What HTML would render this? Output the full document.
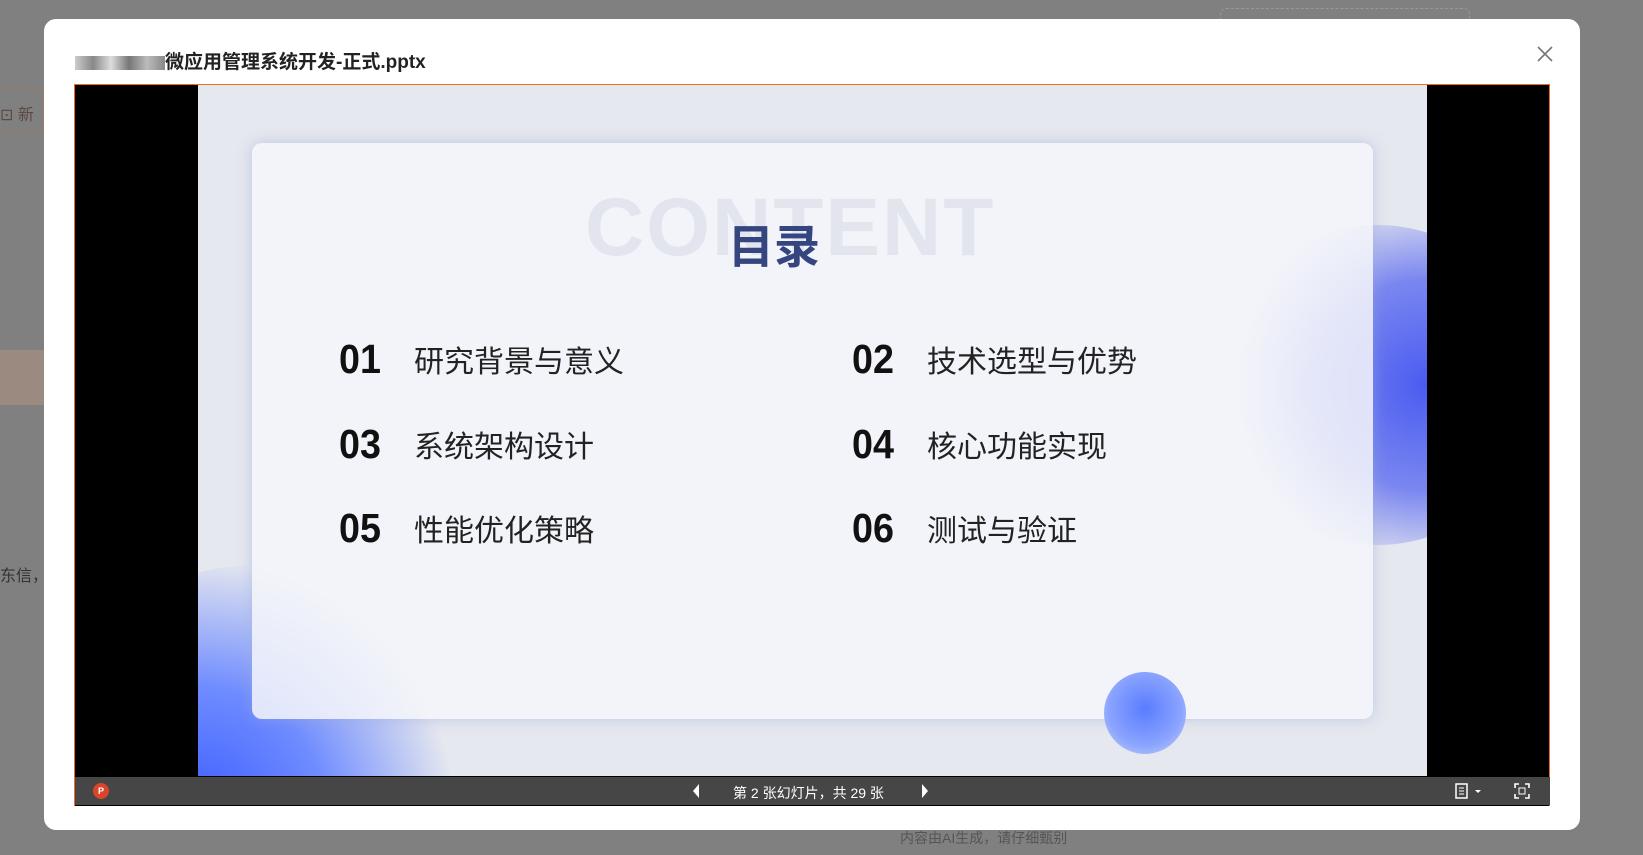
<!DOCTYPE html>
<html><head><meta charset="utf-8"><style>
*{margin:0;padding:0;box-sizing:border-box}
html,body{width:1643px;height:855px;overflow:hidden}
body{background:#808080;position:relative;font-family:"Liberation Sans","Noto Sans CJK SC",sans-serif}
.abs{position:absolute}
.modal{left:44px;top:19px;width:1536px;height:811px;background:#fff;border-radius:12px}
.title{left:75px;top:47px;font-size:19px;color:#222;font-weight:bold}
.frame{left:74px;top:84px;width:1476px;height:722px;border:1px solid #f06a2a;border-bottom:none;background:#000}
.slide{left:198px;top:85px;width:1229px;height:691px;background:#e6e8ef;overflow:hidden}
.card{left:54px;top:58px;width:1121px;height:576px;background:rgba(245,246,250,.86);border-radius:10px;box-shadow:0 0 14px rgba(150,170,220,.5)}
.num{font-size:41px;font-weight:bold;color:#111;transform:scaleX(.92);transform-origin:left}
.txt{font-size:30px;color:#222}
.bar{left:75px;top:777px;width:1475px;height:28px;background:#464646;color:#fff;font-size:14px}
</style></head><body>
<div class="abs" style="left:0;top:88px;width:44px;height:44px;border:1px solid #9a7a68;border-left:none;color:#5a4a40;font-size:16px;padding:12px 0 0 0">⊡ 新</div>
<div class="abs" style="left:0;top:350px;width:44px;height:55px;background:#9a8a80"></div>
<div class="abs" style="left:0;top:562px;color:#333;font-size:16px">东信，</div>
<div class="abs" style="left:1220px;top:8px;width:250px;height:12px;border:1px dashed #999;border-bottom:none;border-radius:6px 6px 0 0"></div>
<div class="abs" style="left:900px;top:829px;color:#555;font-size:14px;line-height:18px">内容由AI生成，请仔细甄别</div>
<div class="abs modal"></div>
<div class="abs title"><span style="display:inline-block;width:90px;height:14px;background:linear-gradient(90deg,#ccc,#888,#ddd,#777,#bbb,#888);vertical-align:middle"></span>微应用管理系统开发-正式.pptx</div>
<svg class="abs" style="left:1535px;top:44px" width="20" height="20"><path d="M3 3L17 17M17 3L3 17" stroke="#777" stroke-width="1.6"/></svg>
<div class="abs frame"></div>
<div class="abs slide">
 <div class="abs" style="left:1020px;top:140px;width:320px;height:320px;border-radius:50%;background:radial-gradient(circle at 65% 50%,#4a5cf0 0%,#7a86f0 40%,rgba(200,205,245,0) 72%)"></div>
 <div class="abs" style="left:-150px;top:480px;width:420px;height:360px;border-radius:50%;background:radial-gradient(circle at 35% 70%,#3a5cff 0%,#6f8cff 35%,rgba(220,225,245,0) 70%)"></div>
 <div class="abs card">
  <div class="abs" style="left:333px;top:38px;font-size:82px;font-weight:bold;color:#e2e5ee;letter-spacing:2px">CONTENT</div>
  <div class="abs" style="left:476px;top:68px;font-size:46px;font-weight:bold;color:#34457f">目录</div>
  <div class="abs num" style="left:87px;top:193px">01</div><div class="abs txt" style="left:162px;top:194px">研究背景与意义</div>
  <div class="abs num" style="left:600px;top:193px">02</div><div class="abs txt" style="left:675px;top:194px">技术选型与优势</div>
  <div class="abs num" style="left:87px;top:278px">03</div><div class="abs txt" style="left:162px;top:279px">系统架构设计</div>
  <div class="abs num" style="left:600px;top:278px">04</div><div class="abs txt" style="left:675px;top:279px">核心功能实现</div>
  <div class="abs num" style="left:87px;top:362px">05</div><div class="abs txt" style="left:162px;top:363px">性能优化策略</div>
  <div class="abs num" style="left:600px;top:362px">06</div><div class="abs txt" style="left:675px;top:363px">测试与验证</div>
 </div>
 <div class="abs" style="left:906px;top:587px;width:82px;height:82px;border-radius:50%;background:radial-gradient(circle at 50% 45%,#5a7cff,#8aa4ff 60%,rgba(160,180,255,.3))"></div>
</div>
<div class="abs bar">
 <div class="abs" style="left:18px;top:6px;width:16px;height:16px;border-radius:50%;background:#d9442a;color:#fff;font-size:9px;font-weight:bold;text-align:center;line-height:16px">P</div>
 <svg class="abs" style="left:616px;top:6px" width="10" height="16"><path d="M8 1L2 8L8 15Z" fill="#fff"/></svg>
 <div class="abs" style="left:658px;top:6px">第 2 张幻灯片，共 29 张</div>
 <svg class="abs" style="left:845px;top:6px" width="10" height="16"><path d="M2 1L8 8L2 15Z" fill="#fff"/></svg>
 <svg class="abs" style="left:1380px;top:6px" width="30" height="16"><rect x="1" y="1" width="11" height="14" fill="none" stroke="#fff" stroke-width="1.5"/><path d="M4 5h5M4 8h5M4 11h5" stroke="#fff"/><path d="M20 7l3 3 3-3Z" fill="#fff"/></svg>
 <svg class="abs" style="left:1439px;top:6px" width="16" height="16"><path d="M1 5V1h4M11 1h4v4M15 11v4h-4M5 15H1v-4" stroke="#fff" stroke-width="1.6" fill="none"/><rect x="5" y="5" width="6" height="6" fill="none" stroke="#fff"/></svg>
</div>
</body></html>
